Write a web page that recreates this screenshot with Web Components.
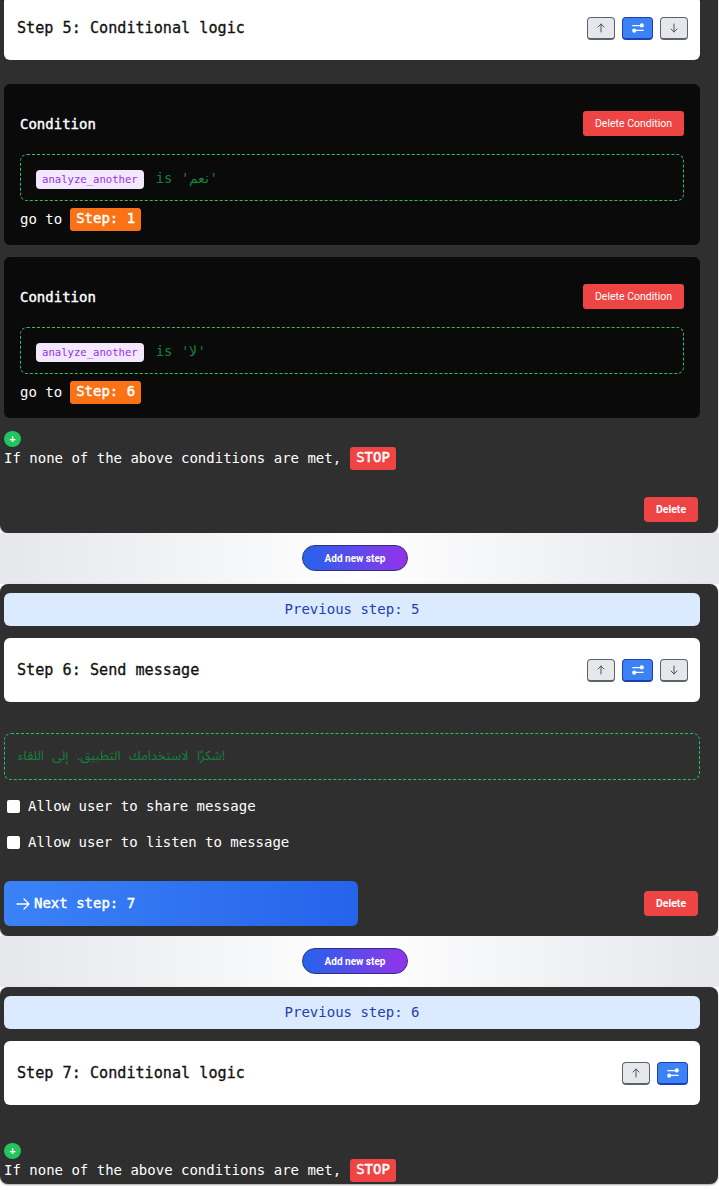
<!DOCTYPE html>
<html><head><meta charset="utf-8"><style>
html,body{margin:0;padding:0;background:#fff}
body{font-family:"DejaVu Sans Mono",monospace;width:719px;height:1190px;overflow:hidden}
flow-page{margin-top:-13px}
</style></head><body>
<flow-page>
<step-card>
<step-head title="Step 5: Conditional logic" down></step-head>
<cond-block var="analyze_another" val="نعم" step="1"></cond-block>
<cond-block var="analyze_another" val="لا" step="6"></cond-block>
<fallback-row></fallback-row>
<card-foot></card-foot>
</step-card>
<add-step></add-step>
<step-card>
<prev-step n="5"></prev-step>
<step-head title="Step 6: Send message" down></step-head>
<msg-box>شكرًا لاستخدامك التطبيق. إلى اللقاء!</msg-box>
<check-row>Allow user to share message</check-row>
<check-row>Allow user to listen to message</check-row>
<card-foot next="7"></card-foot>
</step-card>
<add-step></add-step>
<step-card last>
<prev-step n="6"></prev-step>
<step-head title="Step 7: Conditional logic"></step-head>
<fallback-row last></fallback-row>
</step-card>
</flow-page>
<script>
const def=(name,html)=>customElements.define(name,class extends HTMLElement{
  connectedCallback(){ if(this.shadowRoot) return; const r=this.attachShadow({mode:'open'}); r.innerHTML=typeof html==='function'?html(this):html; }
});
def('flow-page',`<style>:host{display:block;width:719px}</style><slot></slot>`);
def('step-card',e=>`<style>:host{display:block;box-sizing:border-box;width:718px;background:#2f2f2f;border-radius:8px;padding:9px 18px ${e.hasAttribute('last')?'2':'0'}px 4px;box-shadow:0 1px 2px rgba(0,0,0,.35)}</style><slot></slot>`);
def('add-step',`<style>:host{display:flex;justify-content:center;box-sizing:border-box;width:719px;height:51px;padding:12px 9px 0 0;background:linear-gradient(90deg,#e5e7eb,#fff 50%,#e5e7eb)}
button{width:106px;height:26px;border-radius:13px;border:1px solid #312e81;background:linear-gradient(90deg,#2563eb,#9333ea);color:#fff;font:700 10px Roboto,sans-serif;padding:0}</style><button>Add new step</button>`);
def('prev-step',e=>`<style>:host{display:block;height:33px;line-height:32px;text-align:center;background:#dbeafe;border-radius:6px;color:#1e40af;font-size:14px;margin-bottom:12px}</style>Previous step: ${e.getAttribute('n')}`);
const up=`<svg width="12" height="12" viewBox="0 0 24 24" fill="none" stroke="#4b5563" stroke-width="2" stroke-linecap="round" stroke-linejoin="round"><path d="M12 20V4M6 10l6-6 6 6"/></svg>`;
const dn=`<svg width="12" height="12" viewBox="0 0 24 24" fill="none" stroke="#4b5563" stroke-width="2" stroke-linecap="round" stroke-linejoin="round"><path d="M12 4v16M6 14l6 6 6-6"/></svg>`;
const sw=`<svg width="14" height="14" viewBox="0 0 24 24" fill="none" stroke="#fff" stroke-width="2" stroke-linecap="round"><path d="M3 8h13M8 16h13"/><circle cx="18.5" cy="7.5" r="2.5" fill="#fff"/><circle cx="5.5" cy="16.5" r="2.5" fill="#fff"/></svg>`;
const arrow=`<svg width="14" height="12" viewBox="0 0 14 12" fill="none" stroke="#fff" stroke-width="1.3" stroke-linecap="round" stroke-linejoin="round"><path d="M1 6h12M8 1l5 5-5 5"/></svg>`;
def('step-head',e=>`<style>:host{display:flex;align-items:center;justify-content:space-between;box-sizing:border-box;height:64px;background:#fff;border-radius:6px;padding:0 12px 0 13px;color:#111}
h2{margin:0;font:400 15.15px "DejaVu Sans Mono",monospace;-webkit-text-stroke:.3px #111}
.b{display:flex;gap:7px}
button{display:flex;align-items:center;justify-content:center;width:28px;height:23px;padding:0;border:1px solid #5b6270;border-bottom-width:2px;border-radius:4px;background:#e5e7eb}
button.s{width:31px;background:#3b82f6;border-color:#1e40af}</style>
<h2>${e.getAttribute('title')}</h2><div class="b"><button>${up}</button><button class="s">${sw}</button>${e.hasAttribute('down')?`<button>${dn}</button>`:''}</div>`);
def('cond-block',e=>`<style>:host{display:block;box-sizing:border-box;height:161px;background:#0a0a0a;border-radius:6px;padding:27px 16px 0;margin:24px 0 -12px;color:#fff}
.t{display:flex;justify-content:space-between;align-items:center;height:25px}
b{font-size:14px;font-weight:400;-webkit-text-stroke:.4px #fff}
button{width:101px;height:25px;border:0;border-radius:3px;background:#ef4444;color:#fff;font:10.5px Roboto,sans-serif;padding:0}
.d{box-sizing:border-box;height:47px;margin-top:18px;border:1px dashed #22c55e;border-radius:7px;padding:0 15px;display:flex;align-items:center;gap:12px;color:#15803d;font-size:14px}
.p{background:#f3e8ff;color:#9333ea;font-size:10.6px;border-radius:4px;height:19px;line-height:19px;padding:0 6px;margin-top:4px}
.ar{font-family:"Noto Sans",sans-serif}
.g{margin-top:7px;font-size:14px;display:flex;align-items:center;gap:8px;height:23px}
.g span:first-child{margin-top:-2px}
.o{background:#f97316;font-weight:400;-webkit-text-stroke:.45px #fff;border-radius:3px;padding:0 6px;height:23px;line-height:21px}
</style><div class="t"><b>Condition</b><button>Delete Condition</button></div>
<div class="d"><span class="p">${e.getAttribute('var')}</span><span>is '<span class="ar">${e.getAttribute('val')}</span>'</span></div>
<div class="g"><span>go to</span><span class="o">Step: ${e.getAttribute('step')}</span></div>`);
def('fallback-row',e=>`<style>:host{display:block;color:#fff;font-size:14px;margin-top:${e.hasAttribute('last')?'38':'25'}px}
.a{display:flex;align-items:center;justify-content:center;width:17px;height:16px;border-radius:50%;background:#22c55e;color:#fff;font-size:10px;font-weight:700;line-height:1}
.r{display:flex;align-items:center;gap:9px;height:23px;white-space:pre}
.r span:first-child{margin-top:-2px}
.s{background:#ef4444;font-weight:400;-webkit-text-stroke:.45px #fff;border-radius:3px;padding:0 6px;height:23px;line-height:21px}</style>
<div class="a">+</div><div class="r"><span>If none of the above conditions are met,</span><span class="s">STOP</span></div>`);
def('card-foot',e=>{const n=e.hasAttribute('next');return `<style>:host{display:flex;justify-content:space-between;align-items:center;height:${n?45:25}px;margin-top:${n?21:27}px;padding-bottom:${n?10:11}px}
.n{display:flex;align-items:center;gap:4px;box-sizing:border-box;width:354px;height:45px;padding:0 0 2px 12px;border-radius:6px;background:linear-gradient(90deg,#3b82f6,#2563eb);color:#fff;font-size:14px;-webkit-text-stroke:.45px #fff}
svg{margin-top:2px;-webkit-text-stroke:0}
.s{flex:1}
button{width:54px;height:25px;border:0;border-radius:4px;background:#ef4444;color:#fff;font:700 10.5px Roboto,sans-serif;padding:0;margin-right:2px}</style>
${n?`<div class="n">${arrow}<span>Next step: ${e.getAttribute('next')}</span></div>`:'<span class="s"></span>'}<button>Delete</button>`});
def('msg-box',`<style>:host{display:block;box-sizing:border-box;height:47px;margin-top:31px;margin-bottom:8px;border:1px dashed #22c55e;border-radius:7px;padding:0 13px;color:#15803d;font:13px/45px "Noto Sans Arabic","Noto Naskh Arabic","Noto Sans",sans-serif;word-spacing:5px}</style><slot></slot>`);
def('check-row',`<style>:host{display:flex;align-items:center;gap:8px;height:36px;color:#fff;font-size:14px;padding-left:3px}
input{appearance:none;-webkit-appearance:none;margin:0;width:13px;height:13px;background:#fff;border-radius:2px}</style><input type="checkbox"><slot></slot>`);
</script>
</body></html>
